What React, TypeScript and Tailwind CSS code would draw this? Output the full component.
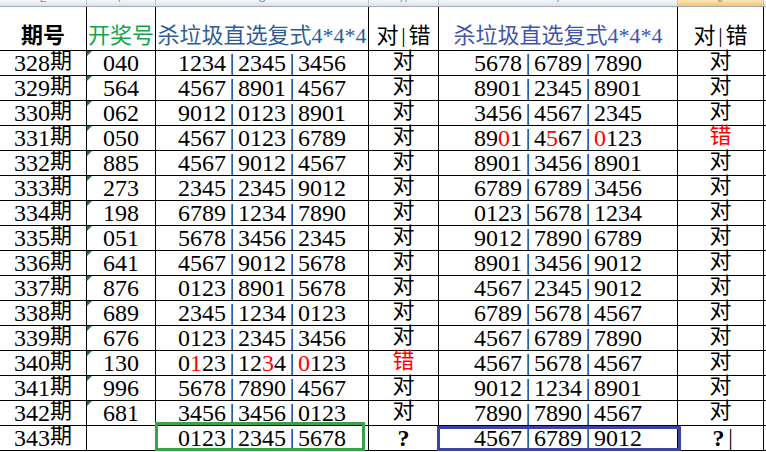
import { Fragment } from "react";

const rows: [string, string, string, string, string, string][] = [
  ["328", "040", "1234|2345|3456", "对", "5678|6789|7890", "对"],
  ["329", "564", "4567|8901|4567", "对", "8901|2345|8901", "对"],
  ["330", "062", "9012|0123|8901", "对", "3456|4567|2345", "对"],
  ["331", "050", "4567|0123|6789", "对", "89[0]1|4[5]67|[0]123", "错"],
  ["332", "885", "4567|9012|4567", "对", "8901|3456|8901", "对"],
  ["333", "273", "2345|2345|9012", "对", "6789|6789|3456", "对"],
  ["334", "198", "6789|1234|7890", "对", "0123|5678|1234", "对"],
  ["335", "051", "5678|3456|2345", "对", "9012|7890|6789", "对"],
  ["336", "641", "4567|9012|5678", "对", "8901|3456|9012", "对"],
  ["337", "876", "0123|8901|5678", "对", "4567|2345|9012", "对"],
  ["338", "689", "2345|1234|0123", "对", "6789|5678|4567", "对"],
  ["339", "676", "0123|2345|3456", "对", "4567|6789|7890", "对"],
  ["340", "130", "0[1]23|12[3]4|[0]123", "错", "4567|5678|4567", "对"],
  ["341", "996", "5678|7890|4567", "对", "9012|1234|8901", "对"],
  ["342", "681", "3456|3456|0123", "对", "7890|7890|4567", "对"],
];

const serif = "font-['Liberation_Serif','Noto_Sans_CJK_SC',serif]";

function Group({ text }: { text: string }) {
  const parts = text.split(/(\[.\])/).filter(Boolean);
  return (
    <span className="text-[24px] leading-[24px]">
      {parts.map((p, i) =>
        p.startsWith("[") ? (
          <span key={i} className="text-[#ff0000]">
            {p[1]}
          </span>
        ) : (
          <span key={i}>{p}</span>
        )
      )}
    </span>
  );
}

function Bar({ size = "data" }: { size?: "data" | "head" }) {
  return size === "data" ? (
    <span className="relative -top-[1px] w-[12px] text-center text-[23px] leading-[23px]">|</span>
  ) : (
    <span className="relative -top-[1px] w-[10px] text-center text-[22px] leading-[22px]">|</span>
  );
}

function Cjk({ children, className = "" }: { children: React.ReactNode; className?: string }) {
  return (
    <span className={`relative -top-[2px] text-[22px] leading-[22px] ${className}`}>{children}</span>
  );
}

function Combo({ value }: { value: string }) {
  const groups = value.split("|");
  return (
    <div className="flex items-center">
      {groups.map((g, i) => (
        <Fragment key={i}>
          {i > 0 && <Bar />}
          <Group text={g} />
        </Fragment>
      ))}
    </div>
  );
}

function Cell({ children, className = "" }: { children?: React.ReactNode; className?: string }) {
  return (
    <div className={`relative flex h-[24px] items-center justify-center bg-white text-[24px] leading-[24px] ${className}`}>
      {children}
    </div>
  );
}

function Triangle() {
  return (
    <span className="absolute left-0 top-0 h-0 w-0 border-r-[5px] border-t-[5px] border-r-transparent border-t-[#1f7f3a]" />
  );
}

function Mark({ v }: { v: string }) {
  return <Cjk className={v === "错" ? "text-[#ff0000]" : ""}>{v}</Cjk>;
}

export default function App() {
  const letters = ["E", "F", "G", "H", "I", "J", ""];
  return (
    <div className={`w-[766px] h-[452px] overflow-hidden bg-white text-black ${serif}`}>
      {/* column letters */}
      <div className="grid h-[7px] grid-cols-[86px_68px_212px_69px_238px_85px_1fr] gap-px border-b border-[#9eabbb] bg-[#b9c3cf]">
        {letters.map((l, i) => (
          <div
            key={i}
            className={`flex justify-center overflow-hidden ${
              i === 5
                ? "bg-gradient-to-b from-[#fde7b8] to-[#f6c56e]"
                : "bg-gradient-to-b from-[#f4f6f9] to-[#dde2e9]"
            }`}
          >
            <span className="-mt-[6px] font-['Liberation_Sans',sans-serif] text-[10px] leading-[10px] text-[#7d8a9c]">
              {l}
            </span>
          </div>
        ))}
      </div>

      <div className="grid grid-cols-[86px_68px_212px_69px_238px_85px_1fr] gap-px bg-black pb-px">
        {/* header row */}
        <div className="flex h-[43px] items-end justify-center bg-white pb-[3px] text-[22px] font-bold leading-none">
          期号
        </div>
        <div className="flex h-[43px] items-end justify-center bg-white pb-[3px] text-[22px] leading-none text-[#12a54a]">
          开奖号
        </div>
        <div className="flex h-[43px] items-end justify-center bg-white pb-[3px] text-[22px] leading-none text-[#2e5d96]">
          杀垃圾直选复式4*4*4
        </div>
        <div className="flex h-[43px] items-end justify-center bg-white pb-[3px] text-[22px] leading-none">
          <span>对</span>
          <Bar size="head" />
          <span>错</span>
        </div>
        <div className="flex h-[43px] items-end justify-center bg-white pb-[3px] text-[22px] leading-none text-[#4254aa]">
          杀垃圾直选复式4*4*4
        </div>
        <div className="flex h-[43px] items-end justify-center bg-white pb-[3px] text-[22px] leading-none">
          <span>对</span>
          <Bar size="head" />
          <span>错</span>
        </div>
        <div className="h-[43px] bg-white" />

        {rows.map((r) => (
          <Fragment key={r[0]}>
            <Cell>
              {r[0]}
              <Cjk>期</Cjk>
            </Cell>
            <Cell>
              <Triangle />
              {r[1]}
            </Cell>
            <Cell>
              <Combo value={r[2]} />
            </Cell>
            <Cell>
              <Mark v={r[3]} />
            </Cell>
            <Cell>
              <Combo value={r[4]} />
            </Cell>
            <Cell>
              <Mark v={r[5]} />
            </Cell>
            <Cell />
          </Fragment>
        ))}

        {/* 343 */}
        <Cell>
          343
          <Cjk>期</Cjk>
        </Cell>
        <Cell />
        <Cell>
          <span className="absolute -left-px -top-[4px] z-10 h-[29px] w-[210px] border-[3px] border-[#37a34a]" />
          <Combo value="0123|2345|5678" />
        </Cell>
        <Cell className="font-bold">?</Cell>
        <Cell>
          <span className="absolute -left-[2px] top-0 z-10 h-[25px] w-[244px] border-[3px] border-[#3b44a6]" />
          <Combo value="4567|6789|9012" />
        </Cell>
        <Cell>
          <div className="ml-[8px] flex items-center">
            <span className="font-bold">?</span>
            <Bar />
          </div>
        </Cell>
        <Cell />
      </div>
    </div>
  );
}
